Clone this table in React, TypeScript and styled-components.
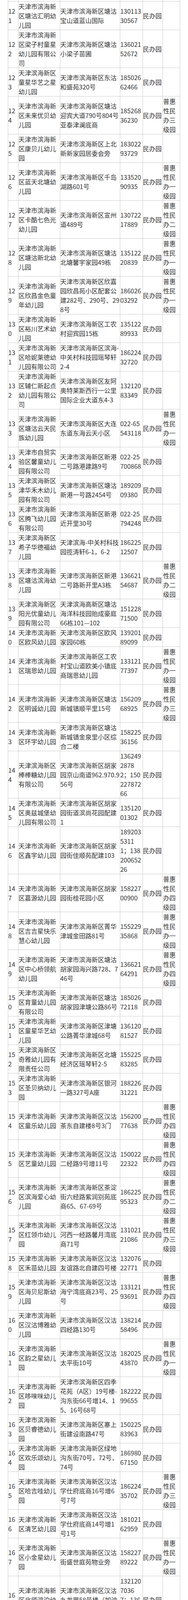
import styled, { createGlobalStyle } from 'styled-components';

const GlobalStyle = createGlobalStyle`
  html, body {
    margin: 0;
    padding: 0;
    background: #ffffff;
  }
`;

const Page = styled.div`
  padding: 0 20px;
`;

const Table = styled.table`
  width: 440px;
  table-layout: fixed;
  border-collapse: collapse;
  font-family: "Noto Sans CJK SC", "Noto Sans", sans-serif;
  font-size: 16px;
  line-height: 24px;
  color: #333333;
`;

const Col = styled.col<{ $w: number }>`
  width: ${({ $w }) => $w}px;
`;

const Row = styled.tr``;

const Cell = styled.td`
  padding: 0;
  border: 1px solid #cccccc;
  vertical-align: middle;
  text-align: left;
  word-break: break-all;
`;

// rows cut off by the top and bottom edges of the view
const EdgeCell = styled.td<{ $h: number; $top?: boolean }>`
  padding: 0;
  height: ${({ $h }) => $h}px;
  border: 1px solid #cccccc;
  ${({ $top }) => ($top ? 'border-top: none;' : 'border-bottom: none;')}
`;

const COLS = [26, 105, 151, 57, 51, 43];

type Kindergarten = {
  no: number;
  name: string;
  addr: string;
  phone: string;
  level?: string;
};

const P1 = '普惠性民办一级园';
const P2 = '普惠性民办二级园';
const P3 = '普惠性民办三级园';
const P4 = '普惠性民办四级园';

const ROWS: Kindergarten[] = [
  { no: 121, name: '天津市滨海新区塘沽汇明幼儿园', addr: '天津市滨海新区塘沽宝山道蓝山国际', phone: '13011330567' },
  { no: 122, name: '天津市滨海新区梁子村童星幼儿园有限公司', addr: '天津市滨海新区塘沽小梁子苗圃', phone: '13602152672' },
  { no: 123, name: '天津滨海新区童星华艺之星幼儿园', addr: '天津市滨海新区东沽和盛苑320号', phone: '18502662466' },
  { no: 124, name: '天津市滨海新区未来优贝幼儿园', addr: '天津市滨海新区塘沽迎宾大道790号804号亚泰津澜底商', phone: '18526836230', level: P3 },
  { no: 125, name: '天津市滨海新区康贝儿幼儿园', addr: '天津市滨海新区上北新新家园居委会旁', phone: '18302293729' },
  { no: 126, name: '天津市滨海新区蓝天北塘幼儿园', addr: '天津市滨海新区千岛湖路601号', phone: '13352090935', level: P1 },
  { no: 127, name: '天津市滨海新区卡酷七色光幼儿园', addr: '天津市滨海新区宣州道489号', phone: '13072217889', level: P2 },
  { no: 128, name: '天津市滨海新区塘沽新北幼儿园', addr: '天津市滨海新区塘沽北塘馨宇家园49栋', phone: '13512220839', level: P1 },
  { no: 129, name: '天津市滨海新区欣昌金色童年幼儿园', addr: '天津市滨海新区欣嘉园欣昌苑小区配套公建282号、290号、298号', phone: '18602603292', level: P1 },
  { no: 130, name: '天津市滨海新区裕川艺术幼儿园', addr: '天津市滨海新区工农村迎宾园15栋', phone: '13512289933' },
  { no: 131, name: '天津市滨海新区哈妮莱德幼儿园有限公司', addr: '天津市滨海新区滨海-中关村科技园瑶琴轩2-4', phone: '18622432720' },
  { no: 132, name: '天津市滨海新区辅仁新起点幼儿园有限公司', addr: '天津市滨海新区友阿奥特莱斯西行一公里国际企业大道东4-3', phone: '13212083349' },
  { no: 133, name: '天津市滨海新区塘沽云天民族幼儿园', addr: '天津市滨海新区大连东道东海云天小区', phone: '022-65543118', level: P1 },
  { no: 134, name: '天津市自贸实验区馨童幼儿园有限公司', addr: '天津市滨海新区新港二号路港建路9号', phone: '022-25700868' },
  { no: 135, name: '天津滨海新区津华禾木幼儿园有限公司', addr: '天津市滨海新区塘沽新港一号路2454号', phone: '18920909380' },
  { no: 136, name: '天津市滨海新区腾飞幼儿园有限公司', addr: '天津市滨海新区新港近开里30号', phone: '022-25794248' },
  { no: 137, name: '天津滨海新区希子华德福幼儿园', addr: '天津滨海-中关村科技园揽涛轩6-1，6-2', phone: '18622512507' },
  { no: 138, name: '天津市滨海新区塘沽滨海幼儿园', addr: '天津市滨海新区新港二号路新开里A3栋', phone: '13662154687', level: P2 },
  { no: 139, name: '天津滨海新区阳光优童幼儿园有限公司', addr: '天津滨海高新区塘沽海洋科技园贻成豪庭66栋101—102', phone: '15122871500' },
  { no: 140, name: '天津市滨海新区欧风幼儿园', addr: '天津市滨海新区欧风家园60栋', phone: '13920189099' },
  { no: 141, name: '天津市滨海新区瑞恩幼儿园', addr: '天津市滨海新区工农村宝山道欧美小镇底商瑞恩幼儿园', phone: '13312177397', level: P1 },
  { no: 142, name: '天津市滨海新区明诚幼儿园', addr: '天津市滨海新区塘沽新城镇顺平里15号', phone: '15620968925', level: P3 },
  { no: 143, name: '天津市滨海新区环宇幼儿园', addr: '天津市滨海新区塘沽新城镇金泉里小区综合二楼', phone: '15822536156' },
  { no: 144, name: '天津滨海新区棒棒糖幼儿园有限公司', addr: '天津市滨海新区胡家园京山南道962.970.956号', phone: '13624928782；15022787266' },
  { no: 145, name: '天津市滨海新区奥兹城堡幼儿园有限公司', addr: '天津市滨海新区胡家园街道滨尚花园配建1', phone: '13512001302' },
  { no: 146, name: '天津市滨海新区鑫宇幼儿园', addr: '天津市滨海新区胡家园街佳顺苑配建103', phone: '18920353111；13820065226' },
  { no: 147, name: '天津市滨海新区嘉源幼儿园', addr: '天津市滨海新区胡家园街桂花园小区', phone: '15822700900', level: P4 },
  { no: 148, name: '天津市滨海新区吉吉星快乐慧心幼儿园', addr: '天津市滨海新区菁华津城金田路81号', phone: '15522935868', level: P1 },
  { no: 149, name: '天津市滨海新区中心桥领航幼儿园', addr: '天津市滨海新区塘沽胡家园海兴路728、746号', phone: '13662164291', level: P4 },
  { no: 150, name: '天津市滨海新区育童幼儿园有限公司', addr: '天津市滨海新区塘沽胡家园津塘公路86号', phone: '18502672118' },
  { no: 151, name: '天津市滨海新区童星华艺幼儿园', addr: '天津市滨海新区津塘公路菁华津城68号', phone: '13612081527' },
  { no: 152, name: '天津滨海新区奇雅幼儿园有限责任公司', addr: '天津市滨海新区北塘经济区瑶琴轩2-5', phone: '15522583285' },
  { no: 153, name: '天津市滨海新区圣贝纳幼儿园', addr: '天津市滨海新区银河一路327号A座', phone: '18822631221' },
  { no: 154, name: '天津市滨海新区童乐幼儿园', addr: '天津市滨海新区汉沽茶东自建楼8号3门', phone: '15620077638', level: P4 },
  { no: 155, name: '天津市滨海新区艺童幼儿园', addr: '天津市滨海新区汉沽二经路9号增11号', phone: '15002222322', level: P4 },
  { no: 156, name: '天津市滨海新区滨海爱心幼儿园', addr: '天津市滨海新区茶淀街六经路紫润别苑底商65、67-69号', phone: '18622595323', level: P2 },
  { no: 157, name: '天津市滨海新区红领巾幼儿园', addr: '天津市滨海新区汉沽河西一经路馨月湾底商71号', phone: '13102121086', level: P3 },
  { no: 158, name: '天津市滨海新区禾苗幼儿园', addr: '天津市滨海新区汉沽友谊路北自建四号楼', phone: '13207622771' },
  { no: 159, name: '天津市滨海新区海贝尼斯幼儿园', addr: '天津市滨海新区汉沽海宁湾底商23号、25号', phone: '13312193691', level: P4 },
  { no: 160, name: '天津市滨海新区汉沽博雅幼儿园', addr: '天津市滨海新区汉沽四经路130号', phone: '13821458496' },
  { no: 161, name: '天津市滨海新区韵之星幼儿园', addr: '天津市滨海新区汉沽太平街10号', phone: '18202543870', level: P1 },
  { no: 162, name: '天津市滨海新区哆唻咪幼儿园', addr: '天津市滨海新区四季花苑（A区）19号楼-沟东街66号增14、15、16号68号', phone: '18222299655' },
  { no: 163, name: '天津市滨海新区贝睿德幼儿园', addr: '天津市滨海新区寨上街建设南路47号', phone: '15022583963' },
  { no: 164, name: '天津市滨海新区欢乐颂幼儿园', addr: '天津市滨海新区绿地沟东街70号，72号，74号', phone: '18698067150' },
  { no: 165, name: '天津市滨海新区哈吉哇幼儿园', addr: '天津市滨海新区汉沽学仕府底商16号增6号7号', phone: '18622435702', level: P3 },
  { no: 166, name: '天津市滨海新区清艺幼儿园', addr: '天津市滨海新区汉沽学仕府底商14号增1号1号', phone: '18102162959' },
  { no: 167, name: '天津市滨海新区小金星幼儿园', addr: '天津市滨海新区汉沽街盛世庭苑物业旁', phone: '15822789222', level: P1 },
  { no: 168, name: '天津市滨海新区北师鸿泊幼儿园', addr: '天津市滨海新区汉沽九龙里58号楼（加油站对过）', phone: '13212070367；13662127972' },
  { no: 169, name: '天津市滨海新区鸿泊幼儿园', addr: '天津市滨海新区汉沽三纬路泰安里362号（茶淀街道旁）', phone: '13662127972；18526179778' },
  { no: 170, name: '天津市滨海新区博育幼儿园', addr: '天津市滨海新区茶淀街一纬路25号', phone: '13820597182' },
  { no: 171, name: '天津市滨海新区滨慧凡幼儿园', addr: '天津市滨海新区汉沽四经路52-54-56号', phone: '15022687338' },
  { no: 172, name: '天津市滨海新区宝宝之家幼儿园', addr: '天津市滨海新区汉沽安阳里友北自建楼11号3门', phone: '15022339207' },
  { no: 173, name: '天津市滨海新区凯蒂幼儿园', addr: '天津市滨海新区汉沽大丰路98号北侧建筑第1、2层', phone: '15342128267', level: P2 },
  { no: 174, name: '天津市滨海新区晨光幼儿园', addr: '天津市滨海新区汉沽安阳里25号', phone: '18622812025', level: P1 },
  { no: 175, name: '天津滨海新区彩虹幼儿园', addr: '天津市滨海新区汉沽盐场俱乐部南侧15号楼', phone: '16622314404', level: P1 },
  { no: 176, name: '天津市滨海新区育苗幼儿园', addr: '天津市滨海新区汉沽桥沽村', phone: '18202201720', level: P3 },
  { no: 177, name: '天津市滨海新区泊清幼儿园', addr: '天津市滨海新区汉沽人民街12号及14号底商', phone: '15002222322', level: P3 },
  { no: 178, name: '天津市滨海新区育苗第二幼儿园', addr: '天津市滨海新区汉沽东风北里原天化供热办公大院', phone: '15620683312' },
  { no: 179, name: '天津市滨海新区神苗幼儿园', addr: '天津市滨海新区胜利街906号', phone: '15522961480' },
  { no: 180, name: '天津市滨海新区大港明星幼儿园', addr: '天津市滨海新区大港振业里小区内', phone: '13821223698', level: P3 },
];

export default function App() {
  return (
    <>
      <GlobalStyle />
      <Page>
        <Table>
          <colgroup>
            {COLS.map((w, i) => (
              <Col key={i} $w={w} />
            ))}
          </colgroup>
          <tbody>
            <Row>
              {COLS.map((_, i) => (
                <EdgeCell key={i} $h={3} $top />
              ))}
            </Row>
            {ROWS.map((r) => (
              <Row key={r.no}>
                <Cell>{r.no}</Cell>
                <Cell>{r.name}</Cell>
                <Cell>{r.addr}</Cell>
                <Cell>{r.phone}</Cell>
                <Cell>民办园</Cell>
                <Cell>{r.level ?? ''}</Cell>
              </Row>
            ))}
            <Row>
              {COLS.map((_, i) => (
                <EdgeCell key={i} $h={1} />
              ))}
            </Row>
          </tbody>
        </Table>
      </Page>
    </>
  );
}
